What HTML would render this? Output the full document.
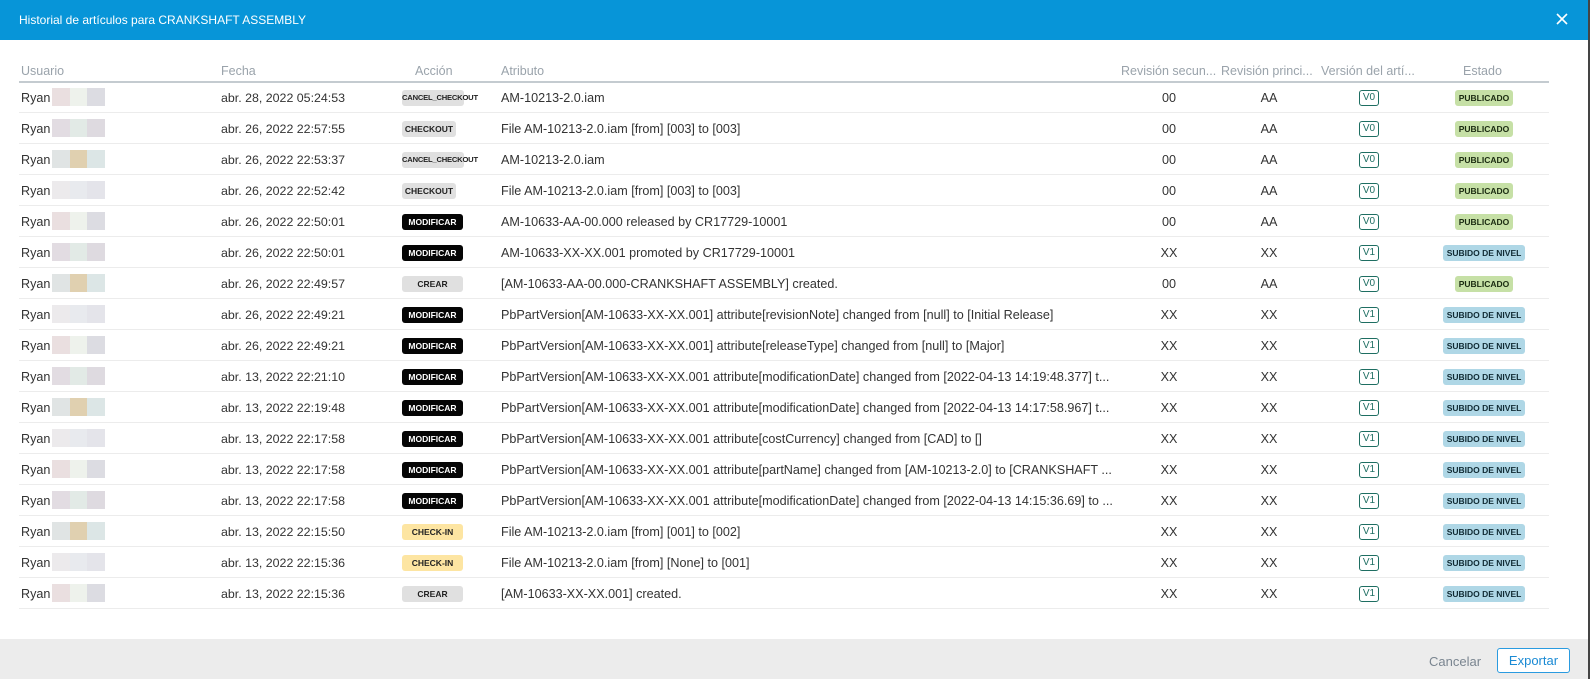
<!DOCTYPE html>
<html><head><meta charset="utf-8"><style>
*{margin:0;padding:0;box-sizing:border-box}
body{width:1592px;height:681px;background:#fff;font-family:"Liberation Sans",sans-serif;position:relative;overflow:hidden;color:#333}
.dlg{position:absolute;left:0;top:0;width:1590px;height:679px;background:#fff;border-right:2px solid #444;border-bottom:2px solid #444}
.hd{position:absolute;left:0;top:0;width:100%;height:40px;background:#0795d8;color:#fff;font-size:12px;line-height:40px;padding-left:19px}
.x{position:absolute;right:18px;top:11px;width:16px;height:16px}
.ft{position:absolute;left:0;top:639px;width:100%;height:40px;background:#ececec}
.cancel{position:absolute;left:1429px;top:654px;font-size:13px;color:#7a8590}
.exp{position:absolute;left:1497px;top:648px;width:73px;height:25px;border:1px solid #2a9be0;border-radius:3px;background:#fff;color:#1a8ad4;font-size:13px;text-align:center;line-height:23px}
.th{position:absolute;top:64px;font-size:12.5px;color:#9aa3ab;white-space:nowrap}
.line{position:absolute;left:19px;width:1530px;height:1px;background:#ececec}
.hl{background:#c4cbd0;height:2px}
.row{position:absolute;left:0;height:31px;width:1560px;font-size:12.6px}
.row span{position:absolute;top:9px;white-space:nowrap}
.row span.dt{font-size:12.4px}
.b{position:absolute;top:8px;height:16px;border-radius:3px;font-size:8.5px;font-weight:bold;text-align:center;line-height:16px;white-space:nowrap}
.cc{left:402px;width:62px;background:#e0e0e0;color:#222;font-size:7.6px;letter-spacing:-0.2px}
.co{left:402px;width:54px;background:#e0e0e0;color:#222}
.mo{left:402px;width:61px;background:#050505;color:#fff}
.cr{left:402px;width:61px;background:#e0e0e0;color:#222}
.ci{left:402px;width:61px;background:#fde5a2;color:#222}
.v{position:absolute;left:1359px;top:8px;width:20px;height:16px;border:1px solid #1e6e62;border-radius:3px;font-size:10px;text-align:center;line-height:14px;color:#1e6e62}
.pu{left:1455px;width:58px;background:#c6e0a6;color:#1a2a10}
.su{left:1443px;width:82px;background:#afd7e6;color:#102a33}
.blur{position:absolute;top:6px;height:18px;width:53px;left:52px;display:flex}
.blur i{flex:1}
</style></head><body>
<div class="dlg">
<div class="hd">Historial de artículos para CRANKSHAFT ASSEMBLY
<svg class="x" viewBox="0 0 16 16"><path d="M3 3L13 13M13 3L3 13" stroke="#fff" stroke-width="1.6"/></svg></div>
<div class="th" style="left:21px">Usuario</div>
<div class="th" style="left:221px">Fecha</div>
<div class="th" style="left:415px">Acción</div>
<div class="th" style="left:501px">Atributo</div>
<div class="th" style="left:1121px">Revisión secun...</div>
<div class="th" style="left:1221px">Revisión princi...</div>
<div class="th" style="left:1321px">Versión del artí...</div>
<div class="th" style="left:1463px">Estado</div>
<div class="line hl" style="top:81px"></div>
<div id="rows"></div>
<div class="ft"></div>
<div class="cancel">Cancelar</div>
<div class="exp">Exportar</div>
</div>
<script>
const d=[
["abr. 28, 2022 05:24:53","cc","CANCEL_CHECKOUT","AM-10213-2.0.iam","00","AA","V0",1],
["abr. 26, 2022 22:57:55","co","CHECKOUT","File AM-10213-2.0.iam [from] [003] to [003]","00","AA","V0",1],
["abr. 26, 2022 22:53:37","cc","CANCEL_CHECKOUT","AM-10213-2.0.iam","00","AA","V0",1],
["abr. 26, 2022 22:52:42","co","CHECKOUT","File AM-10213-2.0.iam [from] [003] to [003]","00","AA","V0",1],
["abr. 26, 2022 22:50:01","mo","MODIFICAR","AM-10633-AA-00.000 released by CR17729-10001","00","AA","V0",1],
["abr. 26, 2022 22:50:01","mo","MODIFICAR","AM-10633-XX-XX.001 promoted by CR17729-10001","XX","XX","V1",0],
["abr. 26, 2022 22:49:57","cr","CREAR","[AM-10633-AA-00.000-CRANKSHAFT ASSEMBLY] created.","00","AA","V0",1],
["abr. 26, 2022 22:49:21","mo","MODIFICAR","PbPartVersion[AM-10633-XX-XX.001] attribute[revisionNote] changed from [null] to [Initial Release]","XX","XX","V1",0],
["abr. 26, 2022 22:49:21","mo","MODIFICAR","PbPartVersion[AM-10633-XX-XX.001] attribute[releaseType] changed from [null] to [Major]","XX","XX","V1",0],
["abr. 13, 2022 22:21:10","mo","MODIFICAR","PbPartVersion[AM-10633-XX-XX.001 attribute[modificationDate] changed from [2022-04-13 14:19:48.377] t...","XX","XX","V1",0],
["abr. 13, 2022 22:19:48","mo","MODIFICAR","PbPartVersion[AM-10633-XX-XX.001 attribute[modificationDate] changed from [2022-04-13 14:17:58.967] t...","XX","XX","V1",0],
["abr. 13, 2022 22:17:58","mo","MODIFICAR","PbPartVersion[AM-10633-XX-XX.001 attribute[costCurrency] changed from [CAD] to []","XX","XX","V1",0],
["abr. 13, 2022 22:17:58","mo","MODIFICAR","PbPartVersion[AM-10633-XX-XX.001 attribute[partName] changed from [AM-10213-2.0] to [CRANKSHAFT ...","XX","XX","V1",0],
["abr. 13, 2022 22:17:58","mo","MODIFICAR","PbPartVersion[AM-10633-XX-XX.001 attribute[modificationDate] changed from [2022-04-13 14:15:36.69] to ...","XX","XX","V1",0],
["abr. 13, 2022 22:15:50","ci","CHECK-IN","File AM-10213-2.0.iam [from] [001] to [002]","XX","XX","V1",0],
["abr. 13, 2022 22:15:36","ci","CHECK-IN","File AM-10213-2.0.iam [from] [None] to [001]","XX","XX","V1",0],
["abr. 13, 2022 22:15:36","cr","CREAR","[AM-10633-XX-XX.001] created.","XX","XX","V1",0]];
const cols=[["#eadfe0","#eef2ec","#dcdce2"],["#e2dce2","#e2eae6","#dedae0"],["#e0e4e4","#e0d0b0","#dce6e6"],["#eceaec","#e8eaee","#e4e4ea"]];
let h="";
d.forEach((r,i)=>{const t=82+i*31;const c=cols[i%4];
h+=`<div class="row" style="top:${t}px"><span style="left:21px">Ryan</span><div class="blur"><i style="background:${c[0]}"></i><i style="background:${c[1]}"></i><i style="background:${c[2]}"></i></div><span class="dt" style="left:221px">${r[0]}</span><div class="b ${r[1]}">${r[2]}</div><span style="left:501px">${r[3]}</span><span style="left:1169px;transform:translateX(-50%)">${r[4]}</span><span style="left:1250px;width:38px;text-align:center">${r[5]}</span><div class="v">${r[6]}</div><div class="b ${r[7]?'pu':'su'}">${r[7]?'PUBLICADO':'SUBIDO DE NIVEL'}</div></div><div class="line" style="top:${t+30}px"></div>`;});
document.getElementById("rows").innerHTML=h;
</script>
</body></html>
